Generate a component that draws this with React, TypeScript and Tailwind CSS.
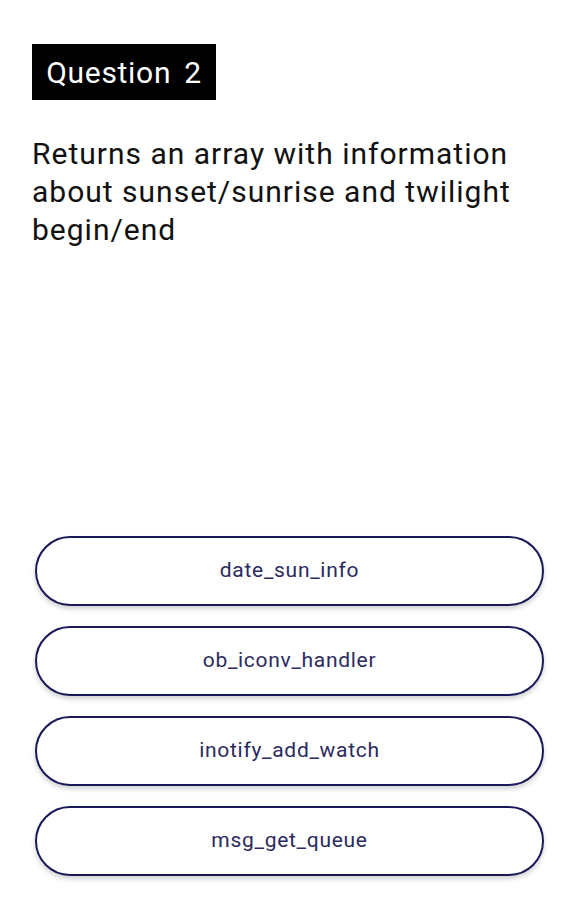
import React from 'react';

const ANSWERS = ['date_sun_info', 'ob_iconv_handler', 'inotify_add_watch', 'msg_get_queue'];

const App: React.FC = () => {
  return (
    <div className="flex h-[900px] w-full flex-col bg-white px-[32px] font-['Roboto',sans-serif]">
      <div className="mt-[44px] flex">
        <span className="flex h-[56px] w-[184px] items-center justify-center gap-[13px] bg-black pt-[1px] text-[30px] tracking-[0.7px] text-white">
          <span>Question</span>
          <span>2</span>
        </span>
      </div>

      <p className="mt-[35px] text-[30px] leading-[38px] tracking-[1px] text-[#111]">
        Returns an array with information about sunset/sunrise and twilight begin/end
      </p>

      <div className="mt-auto mb-[24px] flex flex-col gap-[20px] pl-[3px] pr-[1px]">
        {ANSWERS.map((answer) => (
          <button
            key={answer}
            className="flex h-[70px] w-full items-center justify-center rounded-full border-2 border-[#1a1958] bg-white text-[21px] tracking-[0.7px] text-[#2b2a5e] shadow-[0_3px_5px_rgba(0,0,0,0.18)]"
          >
            {answer}
          </button>
        ))}
      </div>
    </div>
  );
};

export default App;
